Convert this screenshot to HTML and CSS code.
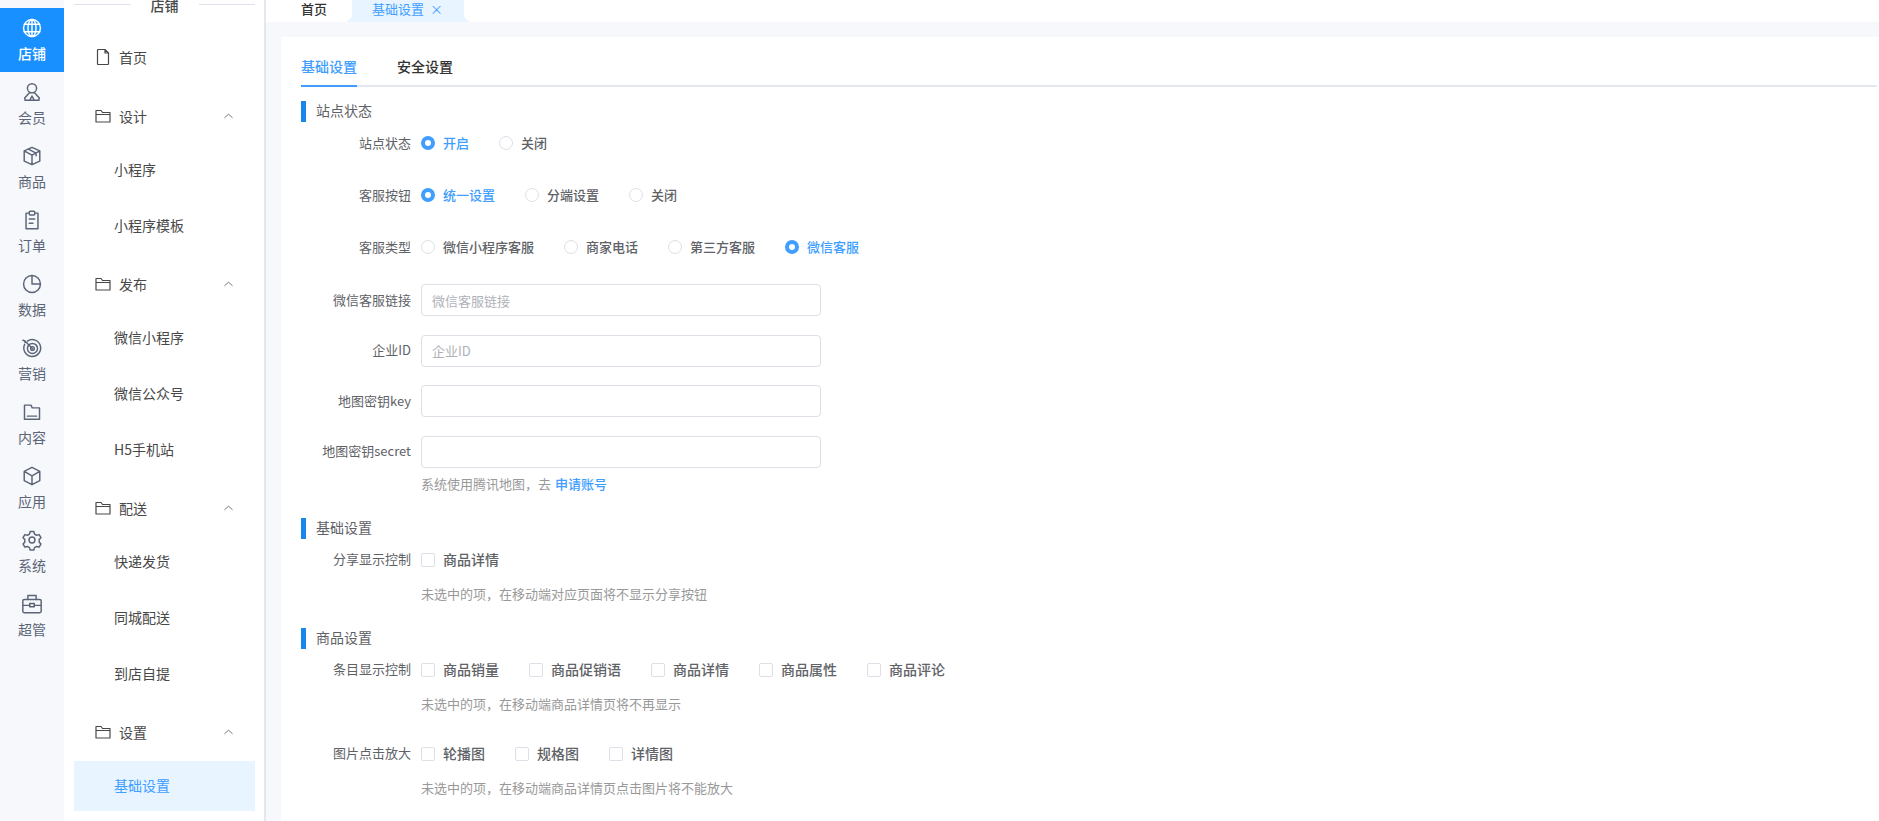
FILE: index.html
```html
<!DOCTYPE html>
<html lang="zh-CN">
<head>
    <meta charset="UTF-8">
    <title>基础设置</title>
    <link rel="stylesheet" href="styles.css">
</head>
<body>
    <div class="layout">
        <nav class="rail">
            <a class="rail-item active">
                <svg viewBox="0 0 24 24" class="rail-icon"><circle cx="12" cy="12" r="9.2"/><ellipse cx="12" cy="12" rx="4.4" ry="9.2"/><path d="M3.6 8h16.8M3.6 16h16.8M12 2.8v18.4"/></svg>
                <span>店铺</span>
            </a>
            <a class="rail-item">
                <svg viewBox="0 0 24 24" class="rail-icon"><circle cx="12" cy="8" r="5"/><path d="M9.5 12.5 4 18.5 4.5 21h15l.5-2.500-5.500-6M12 16.500 9.500 21M12 16.500l2.500 4.500"/></svg>
                <span>会员</span>
            </a>
            <a class="rail-item">
                <svg viewBox="0 0 24 24" class="rail-icon"><path d="M12 2.500 20.500 6.500v11L12 21.500l-8.500-4v-11zM3.500 6.500 12 11l8.500-4.500M12 11v10.500M8 4.500l8.500 4.300v3"/></svg>
                <span>商品</span>
            </a>
            <a class="rail-item">
                <svg viewBox="0 0 24 24" class="rail-icon"><path d="M8.500 4.500H5.500v17h13v-17h-3"/><rect x="9" y="2.500" width="6" height="4" rx="1"/><path d="M9 11h6M9 15.500h4"/></svg>
                <span>订单</span>
            </a>
            <a class="rail-item">
                <svg viewBox="0 0 24 24" class="rail-icon"><circle cx="12" cy="12" r="9.200"/><path d="M12 2.800V12h9.200"/></svg>
                <span>数据</span>
            </a>
            <a class="rail-item">
                <svg viewBox="0 0 24 24" class="rail-icon"><path d="M7 4.500a9.200 9.200 0 1 1-3 3.500"/><circle cx="12.500" cy="12.500" r="5.500"/><circle cx="12.500" cy="12.500" r="2"/><path d="M12.500 12.500 4 4M4 4 2 3.500M4 4l.5 2"/></svg>
                <span>营销</span>
            </a>
            <a class="rail-item">
                <svg viewBox="0 0 24 24" class="rail-icon"><path d="M3.800 4.500h7l1.500 3h7.900v12.500H3.800zM7 16.500h10"/></svg>
                <span>内容</span>
            </a>
            <a class="rail-item">
                <svg viewBox="0 0 24 24" class="rail-icon"><path d="M12 2.500 20.500 7v10L12 21.500 3.500 17V7zM3.500 7 12 11.800 20.500 7M12 11.800v9.700"/></svg>
                <span>应用</span>
            </a>
            <a class="rail-item">
                <svg viewBox="0 0 24 24" class="rail-icon"><path d="M10 2.800h4l.7 2.700 2.400 1.300 2.700-.7 2 3.400-2 2 .1 1.400-.1 1.400 2 2-2 3.400-2.700-.7-2.400 1.300-.7 2.700h-4l-.7-2.700-2.400-1.300-2.700.7-2-3.400 2-2-.1-1.400.1-1.400-2-2 2-3.400 2.700.7 2.400-1.300z"/><circle cx="12" cy="12" r="3.200"/></svg>
                <span>系统</span>
            </a>
            <a class="rail-item">
                <svg viewBox="0 0 24 24" class="rail-icon"><rect x="2" y="7" width="20" height="14.500" rx="1.500"/><path d="M7.500 7V2.800h9V7M2 13.500h7.500M14.500 13.500H22"/><rect x="9.500" y="11.500" width="5" height="3.500"/></svg>
                <span>超管</span>
            </a>
        </nav>

        <aside class="menu">
            <div class="menu-title"><span>店铺</span></div>

            <a class="menu-top">
                <svg viewBox="0 0 16 16" class="menu-icon"><path d="M2.500 1.500q0-1 1-1h6.500l3.500 3.500v10.500q0 1-1 1h-9q-1 0-1-1zM10 .5v3.500h3.500"/></svg>
                <span>首页</span>
            </a>

            <div class="menu-top group">
                <svg viewBox="0 0 16 16" class="menu-icon"><path d="M1 2.500h5l1.500 2H15V14H1zM1 6.500h14"/></svg>
                <span>设计</span>
                <svg viewBox="0 0 10 6" class="chevron"><path d="M.5 5 5 1l4.500 4"/></svg>
            </div>
            <a class="menu-sub">小程序</a>
            <a class="menu-sub">小程序模板</a>

            <div class="menu-top group">
                <svg viewBox="0 0 16 16" class="menu-icon"><path d="M1 2.500h5l1.500 2H15V14H1zM1 6.500h14"/></svg>
                <span>发布</span>
                <svg viewBox="0 0 10 6" class="chevron"><path d="M.5 5 5 1l4.500 4"/></svg>
            </div>
            <a class="menu-sub">微信小程序</a>
            <a class="menu-sub">微信公众号</a>
            <a class="menu-sub">H5手机站</a>

            <div class="menu-top group">
                <svg viewBox="0 0 16 16" class="menu-icon"><path d="M1 2.500h5l1.500 2H15V14H1zM1 6.500h14"/></svg>
                <span>配送</span>
                <svg viewBox="0 0 10 6" class="chevron"><path d="M.5 5 5 1l4.500 4"/></svg>
            </div>
            <a class="menu-sub">快递发货</a>
            <a class="menu-sub">同城配送</a>
            <a class="menu-sub">到店自提</a>

            <div class="menu-top group">
                <svg viewBox="0 0 16 16" class="menu-icon"><path d="M1 2.500h5l1.500 2H15V14H1zM1 6.500h14"/></svg>
                <span>设置</span>
                <svg viewBox="0 0 10 6" class="chevron"><path d="M.5 5 5 1l4.500 4"/></svg>
            </div>
            <a class="menu-sub current">基础设置</a>
        </aside>

        <main class="main">
            <div class="tabbar">
                <a class="page-tab">首页</a>
                <a class="page-tab active">基础设置 <span class="tab-close">×</span></a>
            </div>

            <div class="content">
                <div class="card">
                    <div class="tabs">
                        <a class="tab active">基础设置</a>
                        <a class="tab">安全设置</a>
                    </div>

                    <h3 class="section first">站点状态</h3>
                    <div class="row">
                        <label class="row-label">站点状态</label>
                        <div class="options">
                            <span class="radio on"><i></i>开启</span>
                            <span class="radio"><i></i>关闭</span>
                        </div>
                    </div>
                    <div class="row">
                        <label class="row-label">客服按钮</label>
                        <div class="options">
                            <span class="radio on"><i></i>统一设置</span>
                            <span class="radio"><i></i>分端设置</span>
                            <span class="radio"><i></i>关闭</span>
                        </div>
                    </div>
                    <div class="row before-field">
                        <label class="row-label">客服类型</label>
                        <div class="options">
                            <span class="radio"><i></i>微信小程序客服</span>
                            <span class="radio"><i></i>商家电话</span>
                            <span class="radio"><i></i>第三方客服</span>
                            <span class="radio on"><i></i>微信客服</span>
                        </div>
                    </div>
                    <div class="row field">
                        <label class="row-label">微信客服链接</label>
                        <input class="input" type="text" placeholder="微信客服链接">
                    </div>
                    <div class="row field">
                        <label class="row-label">企业ID</label>
                        <input class="input" type="text" placeholder="企业ID">
                    </div>
                    <div class="row field">
                        <label class="row-label">地图密钥key</label>
                        <input class="input" type="text">
                    </div>
                    <div class="row field last">
                        <label class="row-label">地图密钥secret</label>
                        <input class="input" type="text">
                    </div>
                    <p class="help map-help">系统使用腾讯地图，去 <a class="link">申请账号</a></p>

                    <h3 class="section">基础设置</h3>
                    <div class="row tight">
                        <label class="row-label">分享显示控制</label>
                        <div class="options">
                            <span class="check"><i></i>商品详情</span>
                        </div>
                    </div>
                    <p class="help">未选中的项，在移动端对应页面将不显示分享按钮</p>

                    <h3 class="section">商品设置</h3>
                    <div class="row tight">
                        <label class="row-label">条目显示控制</label>
                        <div class="options">
                            <span class="check"><i></i>商品销量</span>
                            <span class="check"><i></i>商品促销语</span>
                            <span class="check"><i></i>商品详情</span>
                            <span class="check"><i></i>商品属性</span>
                            <span class="check"><i></i>商品评论</span>
                        </div>
                    </div>
                    <p class="help spaced">未选中的项，在移动端商品详情页将不再显示</p>
                    <div class="row tight">
                        <label class="row-label">图片点击放大</label>
                        <div class="options">
                            <span class="check"><i></i>轮播图</span>
                            <span class="check"><i></i>规格图</span>
                            <span class="check"><i></i>详情图</span>
                        </div>
                    </div>
                    <p class="help">未选中的项，在移动端商品详情页点击图片将不能放大</p>
                </div>
            </div>
        </main>
    </div>
</body>
</html>
```

FILE: styles.css
```css
* {
    box-sizing: border-box;
}

html, body {
    margin: 0;
    height: 100%;
    overflow: hidden;
}

body {
    font-family: "Noto Sans CJK SC", "Noto Sans", sans-serif;
    font-size: 13px;
    color: rgb(51, 51, 51);
    background-color: rgb(255, 255, 255);
}

.layout {
    display: flex;
    height: 821px;
}

/* left icon rail */
.rail {
    width: 64px;
    flex: none;
    padding-top: 8px;
    background-color: rgb(246, 248, 251);
}

.rail-item {
    height: 64px;
    display: flex;
    flex-direction: column;
    align-items: center;
    justify-content: center;
    gap: 4px;
    font-size: 14px;
    line-height: 20px;
    color: rgb(92, 100, 120);
}

.rail-item.active {
    background-color: rgb(24, 144, 255);
    color: rgb(255, 255, 255);
    font-weight: 500;
}

.rail-icon {
    width: 22px;
    height: 22px;
    fill: none;
    stroke: currentColor;
    stroke-width: 1.6;
    stroke-linejoin: round;
    stroke-linecap: round;
}

/* second level menu */
.menu {
    width: 202px;
    flex: none;
    padding: 0 9px 0 10px;
    background-color: rgb(255, 255, 255);
    border-right: 2px solid rgb(228, 231, 238);
    font-size: 14px;
    color: rgb(72, 72, 72);
}

.menu-title {
    height: 9px;
    display: flex;
    align-items: center;
    gap: 20px;
    font-weight: 500;
}

.menu-title::before,
.menu-title::after {
    content: "";
    flex: 1;
    height: 1px;
    background-color: rgb(222, 226, 236);
}

.menu-top {
    height: 50px;
    display: flex;
    align-items: center;
    gap: 8px;
    padding: 0 22px 2px 21px;
    margin-top: 24px;
}

.menu-top.group {
    margin-top: 9px;
    margin-bottom: 3px;
}

.menu-icon {
    width: 16px;
    height: 16px;
    flex: none;
    fill: none;
    stroke: rgb(72, 72, 72);
    stroke-width: 1.2;
    stroke-linejoin: round;
}

.chevron {
    width: 9px;
    height: 6px;
    margin-left: auto;
    fill: none;
    stroke: rgb(90, 90, 90);
    stroke-width: 0.9;
}

.menu-sub {
    height: 50px;
    display: flex;
    align-items: center;
    padding: 0 0 2px 40px;
    margin-bottom: 6px;
}

.menu-sub.current {
    background-color: rgb(232, 244, 255);
    color: rgb(64, 158, 255);
}

/* right side */
.main {
    flex: 1;
    min-width: 0;
    display: flex;
    flex-direction: column;
}

.tabbar {
    height: 22px;
    flex: none;
    display: flex;
    padding-left: 35px;
    line-height: 18px;
    font-weight: 500;
}

.page-tab {
    width: 51px;
}

.page-tab.active {
    position: relative;
    width: 112px;
    padding-left: 20px;
    font-weight: 400;
    color: rgb(64, 158, 255);
    background-color: rgb(232, 244, 255);
}

.page-tab.active::before,
.page-tab.active::after {
    content: "";
    position: absolute;
    bottom: 0;
    width: 9px;
    height: 9px;
}

.page-tab.active::before {
    left: -9px;
    background: radial-gradient(circle at 0 0, transparent 9px, rgb(232, 244, 255) 9.5px);
}

.page-tab.active::after {
    right: -9px;
    background: radial-gradient(circle at 100% 0, transparent 9px, rgb(232, 244, 255) 9.5px);
}

.tab-close {
    font-size: 13px;
    margin-left: 3px;
}

.content {
    flex: 1;
    padding: 15px 0 0 15px;
    background-color: rgb(246, 248, 251);
}

.card {
    height: 100%;
    padding: 0 2px 0 20px;
    background-color: rgb(255, 255, 255);
}

.tabs {
    display: flex;
    gap: 40px;
    height: 50px;
    border-bottom: 2px solid rgb(228, 231, 238);
    font-size: 14px;
    font-weight: 500;
}

.tab {
    height: 50px;
    line-height: 58px;
}

.tab.active {
    color: rgb(64, 158, 255);
    border-bottom: 2px solid rgb(64, 158, 255);
}

.section {
    height: 21px;
    margin: 25px 0 0;
    padding: 0 0 2px 10px;
    border-left: 5px solid rgb(24, 134, 235);
    font-size: 14px;
    font-weight: 400;
    line-height: 19px;
    color: rgb(96, 98, 102);
}

.section.first {
    margin-top: 14px;
}

.row {
    display: flex;
    align-items: center;
    gap: 10px;
    height: 32px;
    margin-bottom: 20px;
}

.row.before-field {
    margin-bottom: 21px;
}

.row.field {
    margin-bottom: 18.67px;
}

.row.field.last,
.row.tight {
    margin-bottom: 0;
}

.section + .row {
    margin-top: 5px;
}

.row-label {
    width: 110px;
    flex: none;
    padding-bottom: 2px;
    text-align: right;
    color: rgb(96, 98, 102);
}

.options {
    display: flex;
    align-items: center;
}

.radio,
.check {
    display: flex;
    align-items: center;
    gap: 8px;
    padding-bottom: 2px;
    font-weight: 500;
    color: rgb(96, 98, 102);
}

.radio {
    margin-right: 30px;
}

.check {
    margin-right: 30px;
    font-size: 14px;
}

.radio i,
.check i {
    width: 14px;
    height: 14px;
    margin-top: 2px;
    border: 1px solid rgb(220, 223, 230);
}

.radio i {
    border-radius: 50%;
}

.radio.on {
    color: rgb(64, 158, 255);
}

.radio.on i {
    border: 4.500px solid rgb(64, 158, 255);
}

.check i {
    border-radius: 2px;
}

.input {
    width: 400px;
    height: 32px;
    padding: 0 10px;
    border: 1px solid rgb(220, 223, 230);
    border-radius: 4px;
    font: inherit;
    color: rgb(96, 98, 102);
    outline: none;
}

.input::placeholder {
    color: rgb(176, 178, 184);
}

.help {
    margin: 9px 0 0;
    padding-left: 120px;
    line-height: 18px;
    color: rgb(153, 153, 153);
}

.help.map-help {
    margin-top: 7px;
}

.help.spaced {
    margin-bottom: 25px;
}

.link {
    margin-left: 1px;
    color: rgb(64, 158, 255);
    font-weight: 500;
}
```
